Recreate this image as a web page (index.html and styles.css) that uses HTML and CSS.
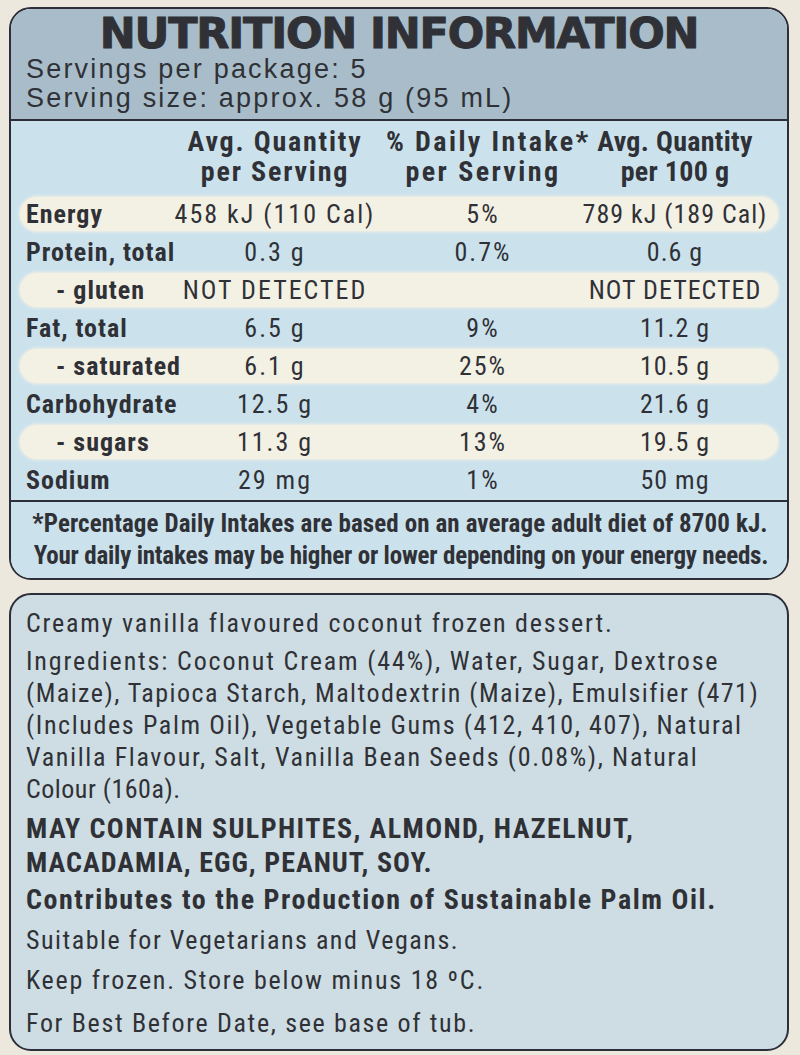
FILE: index.html
```html
<!DOCTYPE html>
<html lang="en">
<head>
<meta charset="utf-8">
<title>Nutrition Information</title>
<link rel="stylesheet" href="styles.css">
</head>
<body>
<section class="panel nip">
  <header class="nip-head">
    <h1 class="nip-title">NUTRITION INFORMATION</h1>
    <p class="nip-serv">Servings per package: 5</p>
    <p class="nip-serv">Serving size: approx. 58 g (95 mL)</p>
  </header>
  <div class="nip-table">
    <div class="row head-row">
      <span></span>
      <span class="c c1">Avg. Quantity<br>per Serving</span>
      <span class="c c2">% Daily Intake*<br>per Serving</span>
      <span class="c c3">Avg. Quantity<br>per 100 g</span>
    </div>
    <div class="row hl"><span class="lab">Energy</span><span class="c c1">458 kJ (110 Cal)</span><span class="c c2">5%</span><span class="c c3">789 kJ (189 Cal)</span></div>
    <div class="row"><span class="lab">Protein, total</span><span class="c c1">0.3 g</span><span class="c c2">0.7%</span><span class="c c3">0.6 g</span></div>
    <div class="row hl"><span class="lab sub">- gluten</span><span class="c c1">NOT DETECTED</span><span class="c c2"></span><span class="c c3">NOT DETECTED</span></div>
    <div class="row"><span class="lab">Fat, total</span><span class="c c1">6.5 g</span><span class="c c2">9%</span><span class="c c3">11.2 g</span></div>
    <div class="row hl"><span class="lab sub">- saturated</span><span class="c c1">6.1 g</span><span class="c c2">25%</span><span class="c c3">10.5 g</span></div>
    <div class="row"><span class="lab">Carbohydrate</span><span class="c c1">12.5 g</span><span class="c c2">4%</span><span class="c c3">21.6 g</span></div>
    <div class="row hl"><span class="lab sub">- sugars</span><span class="c c1">11.3 g</span><span class="c c2">13%</span><span class="c c3">19.5 g</span></div>
    <div class="row"><span class="lab">Sodium</span><span class="c c1">29 mg</span><span class="c c2">1%</span><span class="c c3">50 mg</span></div>
  </div>
  <footer class="nip-foot">
    <span class="f1">*Percentage Daily Intakes are based on an average adult diet of 8700 kJ.</span>
    <span class="f2">Your daily intakes may be higher or lower depending on your energy needs.</span>
  </footer>
</section>

<section class="panel info">
  <p class="p-desc">Creamy vanilla flavoured coconut frozen dessert.</p>
  <p class="p-ingr">
    <span class="ln l1">Ingredients: Coconut Cream (44%), Water, Sugar, Dextrose</span>
    <span class="ln l2">(Maize), Tapioca Starch, Maltodextrin (Maize), Emulsifier (471)</span>
    <span class="ln l3">(Includes Palm Oil), Vegetable Gums (412, 410, 407), Natural</span>
    <span class="ln l4">Vanilla Flavour, Salt, Vanilla Bean Seeds (0.08%), Natural</span>
    <span class="ln l5">Colour (160a).</span>
  </p>
  <p class="p-may">
    <span class="ln m1">MAY CONTAIN SULPHITES, ALMOND, HAZELNUT,</span>
    <span class="ln m2">MACADAMIA, EGG, PEANUT, SOY.</span>
  </p>
  <p class="p-palm">Contributes to the Production of Sustainable Palm Oil.</p>
  <p class="p-veg">Suitable for Vegetarians and Vegans.</p>
  <p class="p-keep">Keep frozen. Store below minus 18 ºC.</p>
  <p class="p-best">For Best Before Date, see base of tub.</p>
</section>
</body>
</html>
```

FILE: styles.css
```css
* { box-sizing: border-box; }
html, body { margin: 0; padding: 0; }
body {
  background: #ece8de;
  width: 800px;
  height: 1055px;
  overflow: hidden;
  color: #303136;
  font-family: "Roboto Condensed", "Liberation Sans", Arial, sans-serif;
}
.panel {
  margin-left: 9px;
  width: 780px;
  border: 2px solid #2c2e3a;
  border-radius: 22px;
  overflow: hidden;
}
.nip { margin-top: 7px; }

/* header */
.nip-head {
  background: #a8bdc9;
  border-bottom: 2px solid #2c2e3a;
  padding: 2px 0 6px 15px;
}
.nip-title {
  margin: 0;
  font-family: "DejaVu Sans", sans-serif;
  font-weight: bold;
  font-size: 43px;
  line-height: 44px;
  letter-spacing: -1.2px;
  text-align: center;
  padding-right: 15px;
  -webkit-text-stroke: 1px #303136;
}
.nip-serv {
  margin: 0;
  font-family: "Liberation Sans", Arial, sans-serif;
  font-size: 27px;
  line-height: 29px;
  letter-spacing: 2.2px;
}

/* table */
.nip-table {
  background: #cbe2ed;
  padding: 6px 9px 3px 9px;
  display: flex;
  flex-direction: column;
  gap: 4px;
}
.row {
  display: grid;
  grid-template-columns: 144px 222px 194px 190px;
  height: 34px;
  border-radius: 17px;
  font-size: 26px;
  line-height: 34px;
  letter-spacing: 2px;
  white-space: nowrap;
}
.row .c { text-align: center; }
.row .c3 { letter-spacing: 1px; }
.row .lab {
  padding-left: 6px;
  font-weight: bold;
  font-size: 26px;
  letter-spacing: 1px;
}
.row .lab.sub { padding-left: 36px; }
.row.hl { background: #f3f0e4; box-shadow: 0 0 3px 1px #f3f0e4; }
.head-row {
  height: 60px;
  margin-bottom: 6px;
  font-weight: bold;
  font-size: 28px;
  line-height: 30px;
}
.head-row .c1 { letter-spacing: 1.8px; }
.head-row .c2 { letter-spacing: 2.4px; }
.head-row .c3 { letter-spacing: 0.3px; }

/* footnote */
.nip-foot {
  background: #cbe2ed;
  border-top: 2px solid #2c2e3a;
  padding: 6px 0 6px 0;
  text-align: center;
  font-weight: bold;
  font-size: 25px;
  line-height: 32px;
  white-space: nowrap;
}
.nip-foot span { display: block; }
.nip-foot .f1 { letter-spacing: 0.1px; padding-left: 2px; }
.nip-foot .f2 { letter-spacing: -0.2px; padding-left: 4px; }

/* ingredients panel */
.info {
  margin-top: 13px;
  height: 458px;
  background: #cddde3;
  padding: 12px 15px 9px 15px;
  white-space: nowrap;
}
.info p {
  margin: 0;
  font-size: 26px;
  line-height: 32px;
  letter-spacing: 1.5px;
}
.info .ln { display: block; }
.info .p-desc { letter-spacing: 1.8px; }
.info .p-ingr { margin-top: 6px; }
.info .l1 { letter-spacing: 1.85px; }
.info .l2 { letter-spacing: 1.47px; }
.info .l3 { letter-spacing: 1.62px; }
.info .l4 { letter-spacing: 1.66px; }
.info .l5 { letter-spacing: 0.5px; }
.info .p-may { margin-top: 7px; font-weight: bold; font-size: 28px; line-height: 34px; }
.info .m1 { letter-spacing: 1.42px; }
.info .m2 { letter-spacing: 1.03px; }
.info .p-palm { margin-top: 4px; font-weight: bold; font-size: 28px; letter-spacing: 1.55px; }
.info .p-veg { margin-top: 8px; }
.info .p-keep { margin-top: 8px; letter-spacing: 1.77px; }
.info .p-best { margin-top: 11px; letter-spacing: 1.65px; }
```
